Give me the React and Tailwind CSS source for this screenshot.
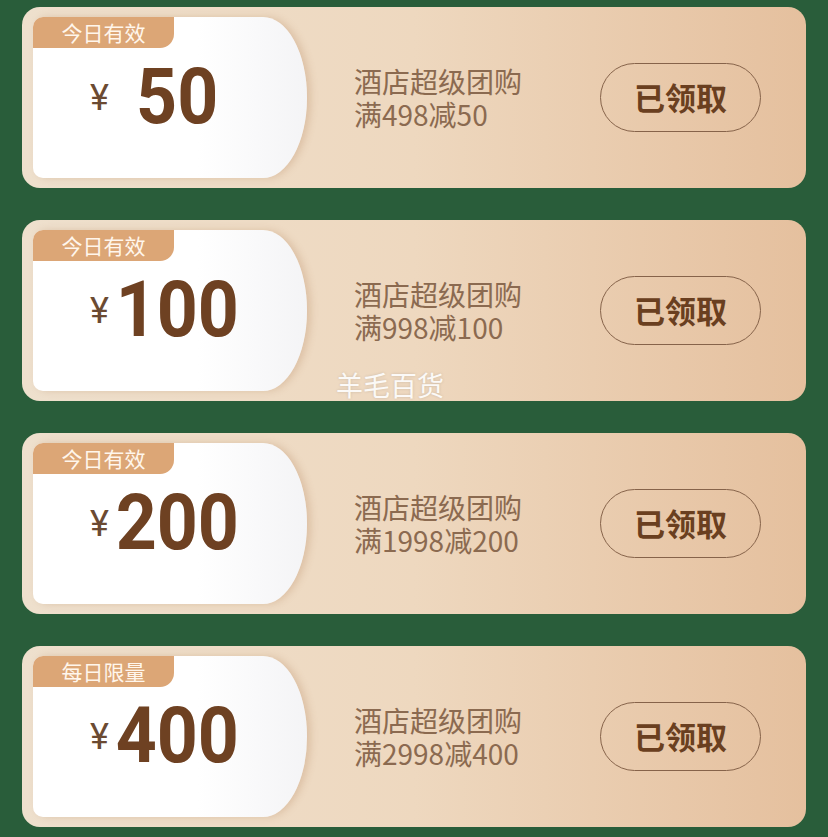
const coupons = [
  { tag: "今日有效", amount: "50", rule: "满498减50" },
  { tag: "今日有效", amount: "100", rule: "满998减100" },
  { tag: "今日有效", amount: "200", rule: "满1998减200" },
  { tag: "每日限量", amount: "400", rule: "满2998减400" },
];

const Coupon = ({ tag, amount, rule }) => {
  return (
    <div className="h-[181px] shrink-0 rounded-[18px] bg-gradient-to-r from-[#eee0cd] via-[#eed8bf] to-[#e5c09e] flex items-center pl-[11px] pr-[45px] py-[10px]">

      <div className="relative h-full w-[274px] shrink-0 rounded-l-[10px] rounded-tr-[44px_80px] rounded-br-[44px_80px] bg-gradient-to-r from-white from-60% to-[#f4f4f6] shadow-[4px_0_7px_rgba(170,120,80,0.25)] flex items-center pl-[57px]">

        <div className="absolute top-0 left-0 w-[141px] h-[31px] rounded-tl-[10px] rounded-br-[14px] bg-[#dca676] text-[#fff6ec] text-[21px] leading-[31px] text-center font-['Noto_Sans_CJK_SC',sans-serif]">
          {tag}
        </div>

        <span className="w-[18px] text-[36px] leading-none text-[#6b4a32] font-['Roboto',sans-serif]">
          ¥
        </span>

        <div className="w-[138px] flex justify-center">
          <span className="inline-block scale-x-[0.93] text-[77px] font-bold leading-none text-[#6e4122] font-['Roboto',sans-serif]">
            {amount}
          </span>
        </div>

      </div>

      <div className="ml-[47px] flex flex-col text-[28px] leading-[33px] text-[#8b6a50] font-['Noto_Sans_CJK_SC',sans-serif]">
        <span>酒店超级团购</span>
        <span>{rule}</span>
      </div>

      <div className="ml-auto w-[161px] h-[69px] rounded-full border-[1.5px] border-[#86634a] flex items-center justify-center text-[31px] font-bold text-[#6a3f20] font-['Noto_Sans_CJK_SC',sans-serif]">
        已领取
      </div>

    </div>
  );
};

const App = () => {
  return (
    <div className="relative h-[837px] overflow-hidden bg-[#295d3a] px-[22px] pt-[7px] flex flex-col gap-[32px]">

      {coupons.map((c) => (
        <Coupon key={c.amount} {...c} />
      ))}

      {/* watermark over the second card */}
      <div className="absolute left-[336px] top-[365px] text-[27px] text-white/90 [text-shadow:0_0_3px_rgba(0,0,0,0.15)] font-['Noto_Sans_CJK_SC',sans-serif]">
        羊毛百货
      </div>

    </div>
  );
};

export default App;
